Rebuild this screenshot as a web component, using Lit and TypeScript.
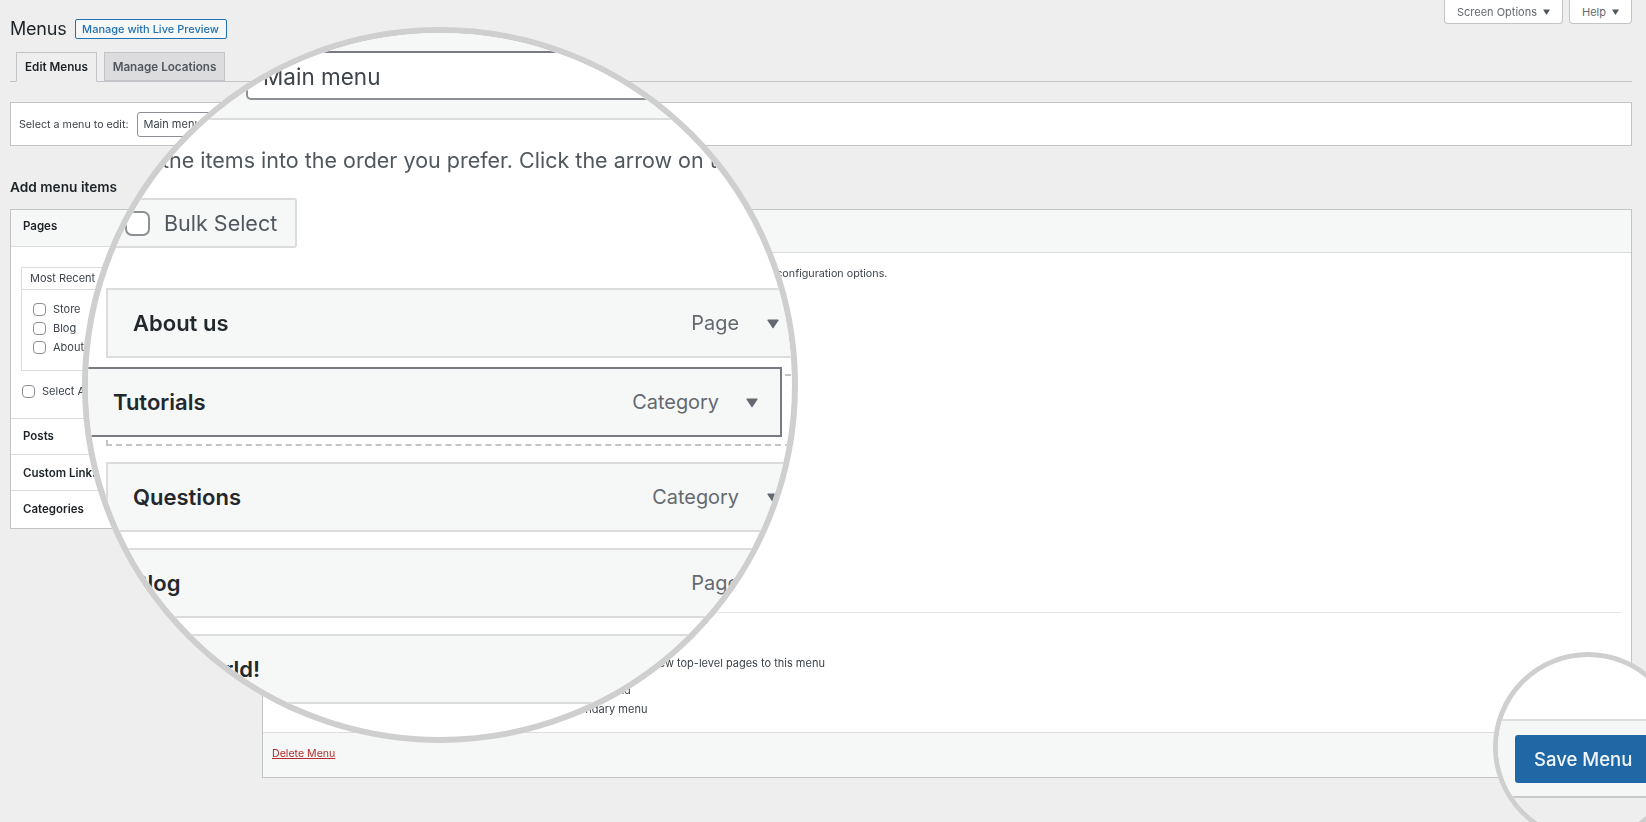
import { LitElement, html, css, svg } from "lit";
import { customElement } from "lit/decorators.js";

const caret = (size: number) => html`<svg class="caret" width=${size} height=${size} viewBox="0 0 12 12">${svg`<path d="M1 2.5h10a.6.6 0 0 1 .5.9L6.5 11a.6.6 0 0 1-1 0L.5 3.4A.6.6 0 0 1 1 2.5z" fill="currentColor"/>`}</svg>`;

const item = (name: string, type: string, cls = "") => html`
  <div class="item ${cls}">
    <span class="item-name">${name}</span>
    <span class="item-type">${type}</span>
    ${caret(12)}
  </div>`;

@customElement("app-root")
export class AppRoot extends LitElement {
  static styles = css`
    :host { display: block; position: relative; width: 1646px; height: 822px; overflow: hidden; background: #eeeeee; font-family: Inter, "Liberation Sans", sans-serif; color: #3c434a; font-size: 11px; }
    * { box-sizing: border-box; }
    .page { padding: 0 14px 0 10px; filter: blur(0.4px); }
    .top { display: flex; justify-content: space-between; align-items: flex-start; height: 39px; }
    .title { display: flex; align-items: center; gap: 8px; padding-top: 19px; }
    .title h1 { margin: 0; font-size: 18px; font-weight: 400; color: #1d2327; line-height: 20px; letter-spacing: -0.2px; }
    .live { display: block; height: 20px; width: 152px; line-height: 18px; text-align: center; font-size: 11px; font-weight: 500; color: #2271b1; background: #f6f7f7; border: 1px solid #2271b1; border-radius: 2px; }
    .meta { display: flex; gap: 6px; }
    .meta div { display: flex; align-items: center; justify-content: center; gap: 6px; height: 24px; background: #fff; border: 1px solid #c3c4c7; border-top: 0; border-radius: 0 0 4px 4px; font-size: 11px; color: #646970; }
    .meta .screen { width: 119px; }
    .meta .help { width: 63px; }
    .meta .caret { color: #50575e; }
    .tabs { display: flex; gap: 7px; margin-top: 13px; padding-left: 6px; height: 30px; border-bottom: 1px solid #c3c4c7; }
    .tab { height: 30px; line-height: 28px; font-size: 11.7px; font-weight: 600; border: 1px solid #c3c4c7; text-align: center; white-space: nowrap; }
    .tab.on { width: 81px; background: #eeeeee; color: #1d2327; border-bottom-color: #eeeeee; }
    .tab.off { width: 121px; height: 29px; background: #dcdcde; color: #50575e; }
    .select-box { display: flex; align-items: center; gap: 8px; margin-top: 20px; height: 44px; padding-left: 8px; background: #fff; border: 1px solid #c3c4c7; font-size: 10.7px; }
    .select { width: 220px; height: 25px; line-height: 23px; padding-left: 6px; border: 1px solid #8c8f94; border-radius: 3px; background: #fff; font-size: 11px; }
    .cols { display: flex; gap: 12px; align-items: flex-start; margin-top: 33px; }
    .side { width: 240px; flex: none; }
    .side h2 { margin: 0 0 14px; font-size: 13.7px; line-height: 16px; font-weight: 600; color: #1d2327; }
    .acc { background: #fff; border: 1px solid #c3c4c7; }
    .acc-row { height: 36px; line-height: 36px; padding-left: 12px; font-size: 11.5px; font-weight: 600; color: #1d2327; border-top: 1px solid #dcdcde; white-space: nowrap; }
    .acc-row.open { height: 37px; line-height: 33px; border-top: 0; background: #f6f7f7; border-bottom: 1px solid #dcdcde; }
    .acc-row.first { line-height: 34px; }
    .acc-row.last { height: 38px; }
    .acc-body { height: 171px; padding: 20px 10px 0; }
    .most { width: 96px; height: 22px; line-height: 20px; padding-left: 8px; border: 1px solid #dcdcde; border-bottom: 0; white-space: nowrap; }
    .list { height: 82px; padding: 12px 11px; border: 1px solid #dcdcde; display: flex; flex-direction: column; gap: 5px; }
    .chk { display: flex; align-items: center; gap: 7px; height: 14px; white-space: nowrap; }
    .chk i { display: block; width: 13px; height: 13px; flex: none; border: 1px solid #8c8f94; border-radius: 4px; background: #fff; }
    .all { margin-top: 13px; margin-left: 1px; }
    .panel { flex: 1; height: 569px; margin-top: 30px; background: #fff; border: 1px solid #c3c4c7; display: flex; flex-direction: column; }
    .panel-head { height: 43px; flex: none; background: #f6f7f7; border-bottom: 1px solid #dcdcde; }
    .panel-body { flex: 1; padding: 0 10px; }
    .drag { margin: 14px 0 0; line-height: 14px; font-size: 10.75px; white-space: nowrap; }
    .settings { margin-top: 331px; padding: 43px 0 0 283px; border-top: 1px solid #e6e6e8; }
    .settings div { line-height: 14px; white-space: nowrap; }
    .settings .gap { margin-top: 13px; margin-left: 3px; }
    .settings .gap2 { margin-top: 5px; margin-left: 3px; }
    .panel-foot { height: 45px; flex: none; display: flex; align-items: flex-start; padding: 14px 9px 0; background: #f6f7f7; border-top: 1px solid #dcdcde; }
    .del { color: #b32d2e; text-decoration: underline; font-size: 10.6px; }

    .lens { position: absolute; border-style: solid; border-color: #cfcfcf; border-radius: 50%; overflow: hidden; filter: blur(0.45px); }
    .lens-a { left: 82px; top: 27px; width: 716px; height: 716px; border-width: 6px; background: #fff; }
    .lens-top { height: 87px; padding: 18px 0 18px 158px; background: #f6f7f7; border-bottom: 2px solid #dcdcde; }
    .input { width: 520px; height: 49px; line-height: 47px; padding-left: 15px; font-size: 22.5px; color: #3c434a; background: #fff; border: 2px solid #8c8f94; border-top-color: #787c82; border-radius: 5px; }
    .hint { margin: 25px 0 0 19px; font-size: 21.5px; line-height: 30px; color: #50575e; white-space: nowrap; }
    .bulk { display: flex; align-items: center; gap: 14px; width: 190px; height: 50px; margin: 23px 0 40px 19px; padding-left: 16px; background: #f6f7f7; border: 2px solid #dcdcde; border-radius: 3px; font-size: 21.5px; color: #50575e; white-space: nowrap; }
    .bulk i { display: block; width: 25px; height: 25px; background: #fff; border: 2px solid #8c8f94; border-radius: 7px; }
    .items { margin-left: 18px; width: 695px; display: flex; flex-direction: column; gap: 16px; }
    .item { display: flex; align-items: center; height: 70px; padding: 0 20px 0 25px; background: #f6f7f7; border: 2px solid #dcdcde; }
    .item-name { flex: 1; font-size: 22px; font-weight: 600; color: #23282d; }
    .item-type { font-size: 19.9px; color: #646970; margin-right: 28px; }
    .item .caret { color: #646970; }
    .slot { position: relative; height: 72px; border: 2px dashed #c3c4c7; }
    .item.drag-item { position: absolute; left: -22px; top: -9px; width: 696px; height: 70px; padding: 0 22px 0 25px; border-color: #787c82; }
    .item.drag-item .item-type { margin-right: 27px; }
    .lens-b { left: 1493px; top: 652px; width: 190px; height: 190px; border-width: 5px; background: #fff; }
    .b-white { height: 62px; }
    .b-foot { height: 79px; padding: 14px 0 0 17px; background: #f5f6f6; border-top: 2px solid #dcdcde; border-bottom: 2px solid #c8c9cb; }
    .save { width: 150px; height: 48px; line-height: 48px; padding-left: 19px; font-size: 18.5px; font-weight: 500; color: #f2f6fa; background: #2068a5; border-radius: 3px; white-space: nowrap; }
    .b-rest { height: 60px; background: #eeeeee; }
  `;

  render() {
    return html`
      <div class="page">
        <div class="top">
          <div class="title"><h1>Menus</h1><span class="live">Manage with Live Preview</span></div>
          <div class="meta">
            <div class="screen">Screen Options ${caret(7)}</div>
            <div class="help">Help ${caret(7)}</div>
          </div>
        </div>
        <div class="tabs">
          <div class="tab on">Edit Menus</div>
          <div class="tab off">Manage Locations</div>
        </div>
        <div class="select-box"><span>Select a menu to edit:</span><div class="select">Main menu</div></div>
        <div class="cols">
          <div class="side">
            <h2>Add menu items</h2>
            <div class="acc">
              <div class="acc-row open">Pages</div>
              <div class="acc-body">
                <div class="most">Most Recent</div>
                <div class="list">
                  <label class="chk"><i></i>Store</label>
                  <label class="chk"><i></i>Blog</label>
                  <label class="chk"><i></i>About us</label>
                </div>
                <label class="chk all"><i></i>Select All</label>
              </div>
              <div class="acc-row first">Posts</div>
              <div class="acc-row">Custom Links</div>
              <div class="acc-row last">Categories</div>
            </div>
          </div>
          <div class="panel">
            <div class="panel-head"></div>
            <div class="panel-body">
              <p class="drag">Drag the items into the order you prefer. Click the arrow on the right of the item to reveal additional configuration options.</p>
              <div class="settings">
                <div>Automatically add new top-level pages to this menu</div>
                <div class="gap">Footer legend</div>
                <div class="gap2">Secondary menu</div>
              </div>
            </div>
            <div class="panel-foot"><span class="del">Delete Menu</span></div>
          </div>
        </div>
      </div>

      <div class="lens lens-a">
        <div class="lens-top"><div class="input">Main menu</div></div>
        <p class="hint">Drag the items into the order you prefer. Click the arrow on the right of the item</p>
        <div class="bulk"><i></i>Bulk Select</div>
        <div class="items">
          ${item("About us", "Page")}
          <div class="slot">${item("Tutorials", "Category", "drag-item")}</div>
          ${item("Questions", "Category")}
          ${item("Blog", "Page")}
          ${item("Hello world!", "Post")}
        </div>
      </div>

      <div class="lens lens-b">
        <div class="b-white"></div>
        <div class="b-foot"><div class="save">Save Menu</div></div>
        <div class="b-rest"></div>
      </div>
    `;
  }
}
